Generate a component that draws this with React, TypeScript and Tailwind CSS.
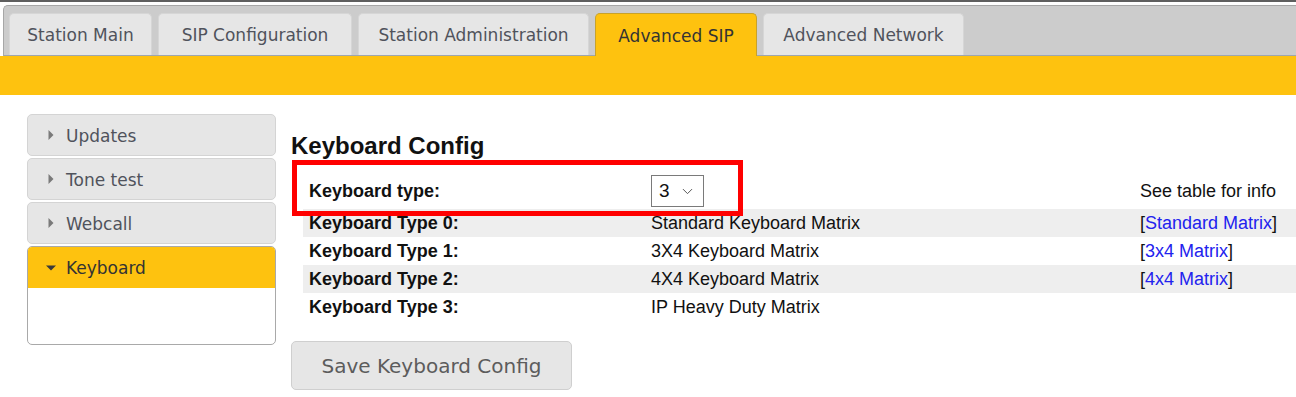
import { ChevronDown } from "lucide-react";

const tabs = [
  { label: "Station Main", width: "w-[143px]" },
  { label: "SIP Configuration", width: "w-[194px]" },
  { label: "Station Administration", width: "w-[231px]" },
  { label: "Advanced SIP", width: "w-[162px]", active: true },
  { label: "Advanced Network", width: "w-[201px]" },
];

const menu = ["Updates", "Tone test", "Webcall"];

const rows = [
  { name: "Keyboard Type 0:", desc: "Standard Keyboard Matrix", link: "Standard Matrix" },
  { name: "Keyboard Type 1:", desc: "3X4 Keyboard Matrix", link: "3x4 Matrix" },
  { name: "Keyboard Type 2:", desc: "4X4 Keyboard Matrix", link: "4x4 Matrix" },
  { name: "Keyboard Type 3:", desc: "IP Heavy Duty Matrix", link: "" },
];

function RightTriangle() {
  return (
    <svg width="6" height="10" viewBox="0 0 6 10" className="shrink-0">
      <path d="M0.5 0 L5.5 5 L0.5 10 Z" fill="#7a7a7a" />
    </svg>
  );
}

function DownTriangle() {
  return (
    <svg width="10" height="6" viewBox="0 0 10 6" className="shrink-0">
      <path d="M0 0.5 L10 0.5 L5 5.5 Z" fill="#3a3a3a" />
    </svg>
  );
}

export default function App() {
  return (
    <div className="h-[397px] w-[1296px] overflow-hidden bg-white">
      {/* top frame */}
      <div className="h-[2px] bg-[#5f5f5f]" />
      <div className="h-[3px] bg-white" />

      <div className="ml-[3px] flex gap-[6px] rounded-tl-[5px] border-l border-t border-b border-[#a7a7a7] border-b-[#9ea6ae] bg-[#cccccc] pl-[5px] pt-[7px] font-['DejaVu_Sans',sans-serif] text-[17px]">
        {tabs.map((tab) =>
          tab.active ? (
            <div
              key={tab.label}
              className={`${tab.width} relative z-10 -mb-px flex h-[43px] items-center justify-center rounded-t-[5px] border border-b-0 border-[#c8a22a] bg-[#fec20f] pt-[3px] text-[#333333]`}
            >
              {tab.label}
            </div>
          ) : (
            <div
              key={tab.label}
              className={`${tab.width} flex h-[42px] items-center justify-center rounded-t-[5px] border border-b-0 border-[#d6d6d6] bg-[#e6e6e6] pt-[3px] text-[#50535c]`}
            >
              {tab.label}
            </div>
          ),
        )}
      </div>
      <div className="h-[39px] bg-[#fec20f]" />

      <div className="flex gap-[15px] pl-[27px] pt-[19px]">
        {/* sidebar */}
        <div className="w-[249px] shrink-0 font-['DejaVu_Sans',sans-serif] text-[17px]">
          {menu.map((item) => (
            <div
              key={item}
              className="mb-[2px] flex h-[42px] items-center gap-[12px] rounded-[5px] border border-[#d4d4d4] bg-[#e6e6e6] pl-[20px] text-[#50535c]"
            >
              <RightTriangle />
              <span className="pt-[3px]">{item}</span>
            </div>
          ))}
          <div className="overflow-hidden rounded-[5px] border border-[#a9a9a9] bg-white">
            <div className="flex h-[41px] items-center gap-[10px] bg-[#fec20f] pl-[18px] text-[#333333]">
              <DownTriangle />
              <span className="pt-[3px]">Keyboard</span>
            </div>
            <div className="h-[56px]" />
          </div>
        </div>

        {/* content */}
        <div className="relative flex-1 pt-[18px] font-['Liberation_Sans',Arial,sans-serif] text-[#111111]">
          <h2 className="text-[24px] font-bold leading-[28px]">Keyboard Config</h2>

          <div className="ml-[12px] mt-[13px]">
            <table className="w-full table-fixed border-collapse text-[18px]">
              <colgroup>
                <col className="w-[342px]" />
                <col className="w-[489px]" />
                <col />
              </colgroup>
              <tbody>
                <tr className="h-[36px]">
                  <td className="px-[6px] font-bold">Keyboard type:</td>
                  <td className="px-[6px]">
                    <div className="flex h-[32px] w-[53px] items-center justify-between border border-[#7a7a7a] bg-white pl-[7px] pr-[7px] text-[19px]">
                      <span>3</span>
                      <ChevronDown size={17} strokeWidth={1.4} className="text-[#555555]" />
                    </div>
                  </td>
                  <td className="px-[6px] whitespace-nowrap">See table for info</td>
                </tr>
                {rows.map((row, i) => (
                  <tr
                    key={row.name}
                    className={`h-[28px] ${i % 2 === 0 ? "bg-[#eeeeee]" : "bg-white"}`}
                  >
                    <td className="px-[6px] font-bold whitespace-nowrap">{row.name}</td>
                    <td className="px-[6px] whitespace-nowrap">{row.desc}</td>
                    <td className="px-[6px] whitespace-nowrap">
                      {row.link && (
                        <>
                          [<span className="text-[#2222ee]">{row.link}</span>]
                        </>
                      )}
                    </td>
                  </tr>
                ))}
              </tbody>
            </table>
          </div>

          <button className="mt-[20px] flex h-[49px] w-[281px] items-center justify-center rounded-[5px] border border-[#cfcfcf] bg-[#e6e6e6] font-['DejaVu_Sans',sans-serif] text-[20px] text-[#5c5c5c]">
            Save Keyboard Config
          </button>

          {/* red highlight annotation */}
          <div className="pointer-events-none absolute left-[1px] top-[46px] h-[56px] w-[451px] border-[5px] border-[#ff0000]" />
        </div>
      </div>
    </div>
  );
}
